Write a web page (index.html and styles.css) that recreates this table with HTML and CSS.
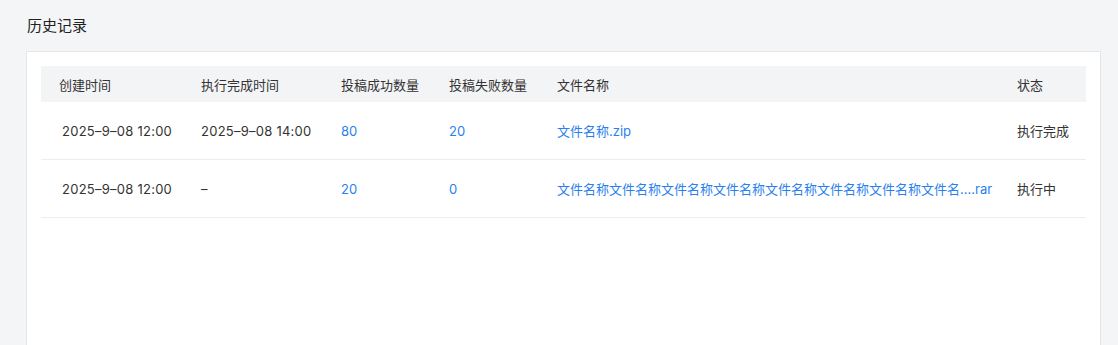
FILE: index.html
```html
<!DOCTYPE html>
<html lang="zh-CN">
<head>
    <meta charset="UTF-8">
    <meta name="viewport" content="width=device-width, initial-scale=1.0">
    <title>历史记录</title>
    <link rel="stylesheet" href="styles.css">
</head>
<body>
    <div class="page">
        <h2 class="page-title">历史记录</h2>

        <div class="card">
            <table class="history-table">
                <colgroup>
                    <col class="col-created">
                    <col class="col-finished">
                    <col class="col-ok">
                    <col class="col-fail">
                    <col class="col-file">
                    <col class="col-status">
                </colgroup>
                <thead>
                    <tr>
                        <th>创建时间</th>
                        <th>执行完成时间</th>
                        <th>投稿成功数量</th>
                        <th>投稿失败数量</th>
                        <th>文件名称</th>
                        <th>状态</th>
                    </tr>
                </thead>
                <tbody>
                    <tr>
                        <td class="date first">2025–9–08 12:00</td>
                        <td class="date">2025–9–08 14:00</td>
                        <td><a class="link" href="#">80</a></td>
                        <td><a class="link" href="#">20</a></td>
                        <td><a class="link" href="#">文件名称.zip</a></td>
                        <td>执行完成</td>
                    </tr>
                    <tr>
                        <td class="date first">2025–9–08 12:00</td>
                        <td>–</td>
                        <td><a class="link" href="#">20</a></td>
                        <td><a class="link" href="#">0</a></td>
                        <td><a class="link" href="#">文件名称文件名称文件名称文件名称文件名称文件名称文件名称文件名….rar</a></td>
                        <td>执行中</td>
                    </tr>
                </tbody>
            </table>
        </div>
    </div>
</body>
</html>
```

FILE: styles.css
```css
body {
    margin: 0;
    background: #f4f5f7;
    font-family: Inter, "Noto Sans CJK SC", sans-serif;
    color: #333;
    overflow: hidden;
}
.page {
    padding: 16px 17px 0 26px;
}
.page-title {
    margin: 0 0 15px 1px;
    font-size: 15px;
    font-weight: 400;
    line-height: 20px;
    color: #222;
}
.card {
    background: #fff;
    border: 1px solid #e4e6ea;
    padding: 14px 14px;
    min-height: 400px;
}
.history-table {
    width: 100%;
    border-collapse: collapse;
    table-layout: fixed;
    font-size: 13px;
}
.col-created { width: 142px; }
.col-finished { width: 140px; }
.col-ok { width: 108px; }
.col-fail { width: 108px; }
.col-file { width: 460px; }
.col-status { width: auto; }
.history-table th {
    background: #f3f4f6;
    font-weight: 400;
    text-align: left;
    height: 36px;
    padding: 0 0 0 18px;
    color: #333;
}
.history-table td {
    height: 57px;
    padding: 0 0 0 18px;
    border-bottom: 1px solid #ededef;
    white-space: nowrap;
    overflow: hidden;
    color: #333;
}
.history-table td.date {
    letter-spacing: 0.25px;
}
.history-table td.first {
    padding-left: 21px;
}
.link {
    color: #2a7fee;
    text-decoration: none;
}
```
